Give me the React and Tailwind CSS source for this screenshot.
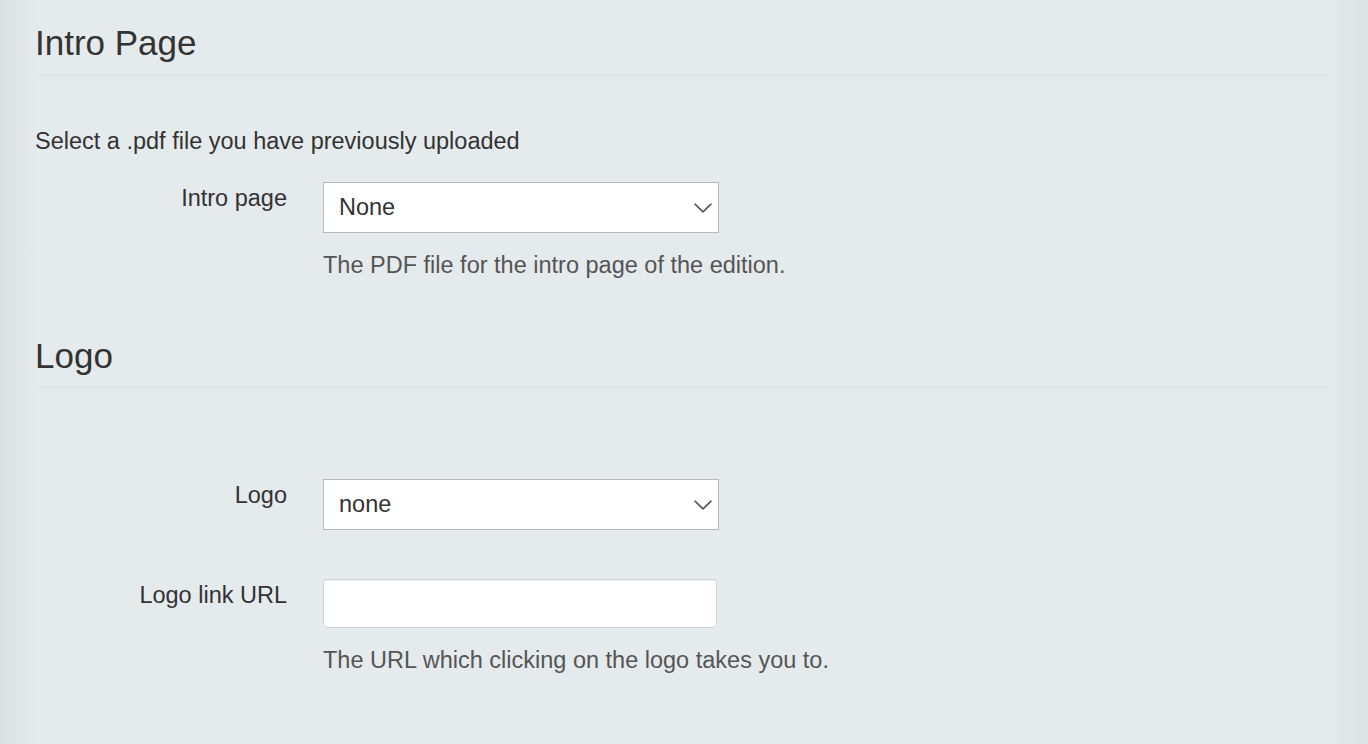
import React from "react";

function Chevron() {
  return (
    <svg
      className="pointer-events-none absolute right-[7px] top-1/2 -translate-y-1/2"
      width="18"
      height="10"
      viewBox="0 0 18 10"
      fill="none"
    >
      <path d="M1 1.2 L9 8.8 L17 1.2" stroke="#555" strokeWidth="1.6" strokeLinecap="round" strokeLinejoin="round" />
    </svg>
  );
}

function SelectBox({ value }) {
  return (
    <div className="relative w-[396px]">
      <select
        defaultValue={value}
        className="appearance-none block w-full h-[51px] bg-white border border-[#b8b8b8] pl-[15px] pr-[30px] text-[23.5px] text-[#333] outline-none font-['Liberation_Sans',sans-serif]"
      >
        <option>{value}</option>
      </select>
      <Chevron />
    </div>
  );
}

function Row({ label, children, help, className = "" }) {
  return (
    <div className={"flex " + className}>
      <div className="w-[252px] shrink-0 text-right leading-[34px] text-[#333] -mt-[1px]">{label}</div>
      <div className="ml-[36px] flex flex-col">
        {children}
        {help && <p className="mt-[15px] leading-[34px] text-[#555]">{help}</p>}
      </div>
    </div>
  );
}

export default function App() {
  return (
    <div className="min-h-[744px] w-full bg-[linear-gradient(to_right,#dbe0e3,#e5eaed_36px,#e5eaed_calc(100%-40px),#dce1e4)] font-['Liberation_Sans',Arial,sans-serif] text-[23.5px] text-[#333] pl-[35px] pr-[40px] pt-[24px] pb-[40px]">
      <h2 className="text-[35px] leading-[38px] pb-[13px] border-b border-[#dde2e5] text-[#333]">Intro Page</h2>
      <p className="mt-[48px] leading-[34px]">Select a .pdf file you have previously uploaded</p>
      <Row label="Intro page" help="The PDF file for the intro page of the edition." className="mt-[24px]">
        <SelectBox value="None" />
      </Row>

      <h2 className="mt-[55px] text-[35px] leading-[38px] pb-[12px] border-b border-[#dde2e5] text-[#333]">Logo</h2>

      <Row label="Logo" className="mt-[91px]">
        <SelectBox value="none" />
      </Row>
      <Row label="Logo link URL" help="The URL which clicking on the logo takes you to." className="mt-[49px]">
        <input
          type="text"
          className="block w-[394px] h-[49px] bg-white border border-[#cfd1d3] rounded-[4px] shadow-[inset_0_1px_1px_rgba(0,0,0,0.06)] outline-none px-[15px] text-[23.5px]"
        />
      </Row>
    </div>
  );
}
